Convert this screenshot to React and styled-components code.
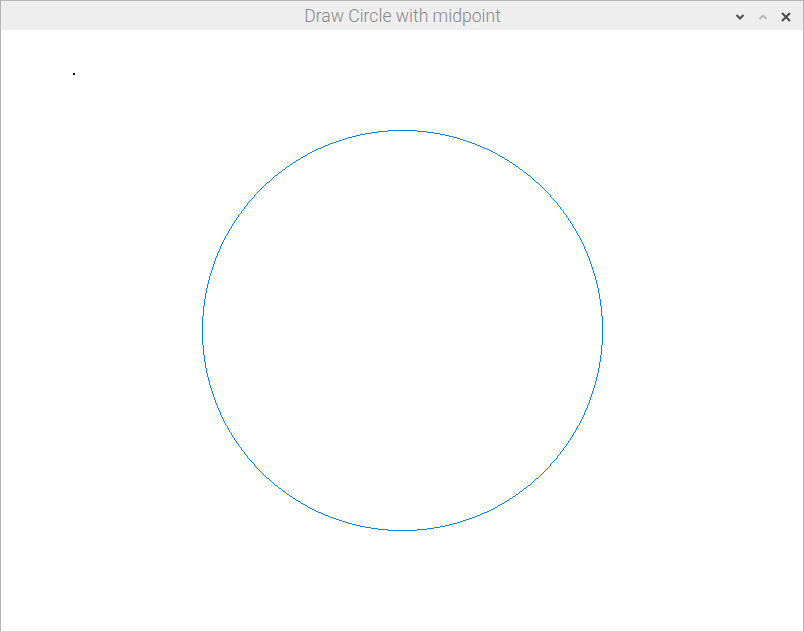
import React from "react";
import styled, { createGlobalStyle } from "styled-components";

const GlobalStyle = createGlobalStyle`
  html, body {
    margin: 0;
    padding: 0;
    background: #ffffff;
  }
`;

const Window = styled.div`
  width: 804px;
  height: 632px;
  box-sizing: border-box;
  display: flex;
  flex-direction: column;
  border: 1px solid #b4b4b4;
  border-bottom-color: #d6d6d6;
  background: #ffffff;
  overflow: hidden;
`;

const TitleBar = styled.div`
  height: 29px;
  flex: none;
  display: grid;
  grid-template-columns: 1fr auto 1fr;
  align-items: center;
  background: #eeeeee;
`;

const Title = styled.div`
  grid-column: 2;
  font-family: Roboto, "Liberation Sans", sans-serif;
  font-weight: 300;
  font-size: 17.6px;
  color: #888888;
  padding-left: 1px;
  padding-top: 1px;
`;

const Controls = styled.div`
  grid-column: 3;
  justify-self: end;
  display: flex;
  align-items: center;
  gap: 11px;
  padding-right: 11px;
  padding-top: 2px;
`;

const ControlButton = styled.button`
  border: 0;
  padding: 0;
  margin: 0;
  width: 12px;
  height: 12px;
  display: flex;
  align-items: center;
  justify-content: center;
  background: none;
  color: ${(p) => (p.$dim ? "#b8b8b8" : "#4a4a4a")};
`;

const Canvas = styled.div`
  flex: 1;
  position: relative;
  background: #ffffff;
`;

const Drawing = styled.svg`
  display: block;
  width: 100%;
  height: 100%;
`;

function midpointCircle(cx, cy, r) {
  const pts = [];
  let x = r;
  let y = 0;
  let p = 1 - r;
  while (x >= y) {
    pts.push(
      [cx + x, cy + y], [cx - x, cy + y], [cx + x, cy - y], [cx - x, cy - y],
      [cx + y, cy + x], [cx - y, cy + x], [cx + y, cy - x], [cx - y, cy - x]
    );
    y++;
    if (p <= 0) {
      p += 2 * y + 1;
    } else {
      x--;
      p += 2 * (y - x) + 1;
    }
  }
  return pts.map(([px, py]) => `M${px} ${py}h1v1h-1z`).join("");
}

const circlePath = midpointCircle(401, 300, 200);

export default function App() {
  return (
    <>
      <GlobalStyle />
      <Window>
        <TitleBar>
          <Title>Draw Circle with midpoint</Title>
          <Controls>
            <ControlButton aria-label="Minimise">
              <svg width="10" height="8" viewBox="0 0 10 8">
                <path d="M1.5 2 L5 5.5 L8.5 2" fill="none" stroke="currentColor" strokeWidth="2" />
              </svg>
            </ControlButton>
            <ControlButton aria-label="Maximise" $dim>
              <svg width="10" height="8" viewBox="0 0 10 8">
                <path d="M1.5 6 L5 2.5 L8.5 6" fill="none" stroke="currentColor" strokeWidth="1.8" />
              </svg>
            </ControlButton>
            <ControlButton aria-label="Close">
              <svg width="10" height="10" viewBox="0 0 10 10">
                <path d="M1 1 L9 9 M9 1 L1 9" fill="none" stroke="currentColor" strokeWidth="2" />
              </svg>
            </ControlButton>
          </Controls>
        </TitleBar>
        <Canvas>
          <Drawing shapeRendering="crispEdges">
            <rect x="72" y="43" width="2" height="2" fill="#000000" />
            <path d={circlePath} fill="#0a80f5" />
          </Drawing>
        </Canvas>
      </Window>
    </>
  );
}
